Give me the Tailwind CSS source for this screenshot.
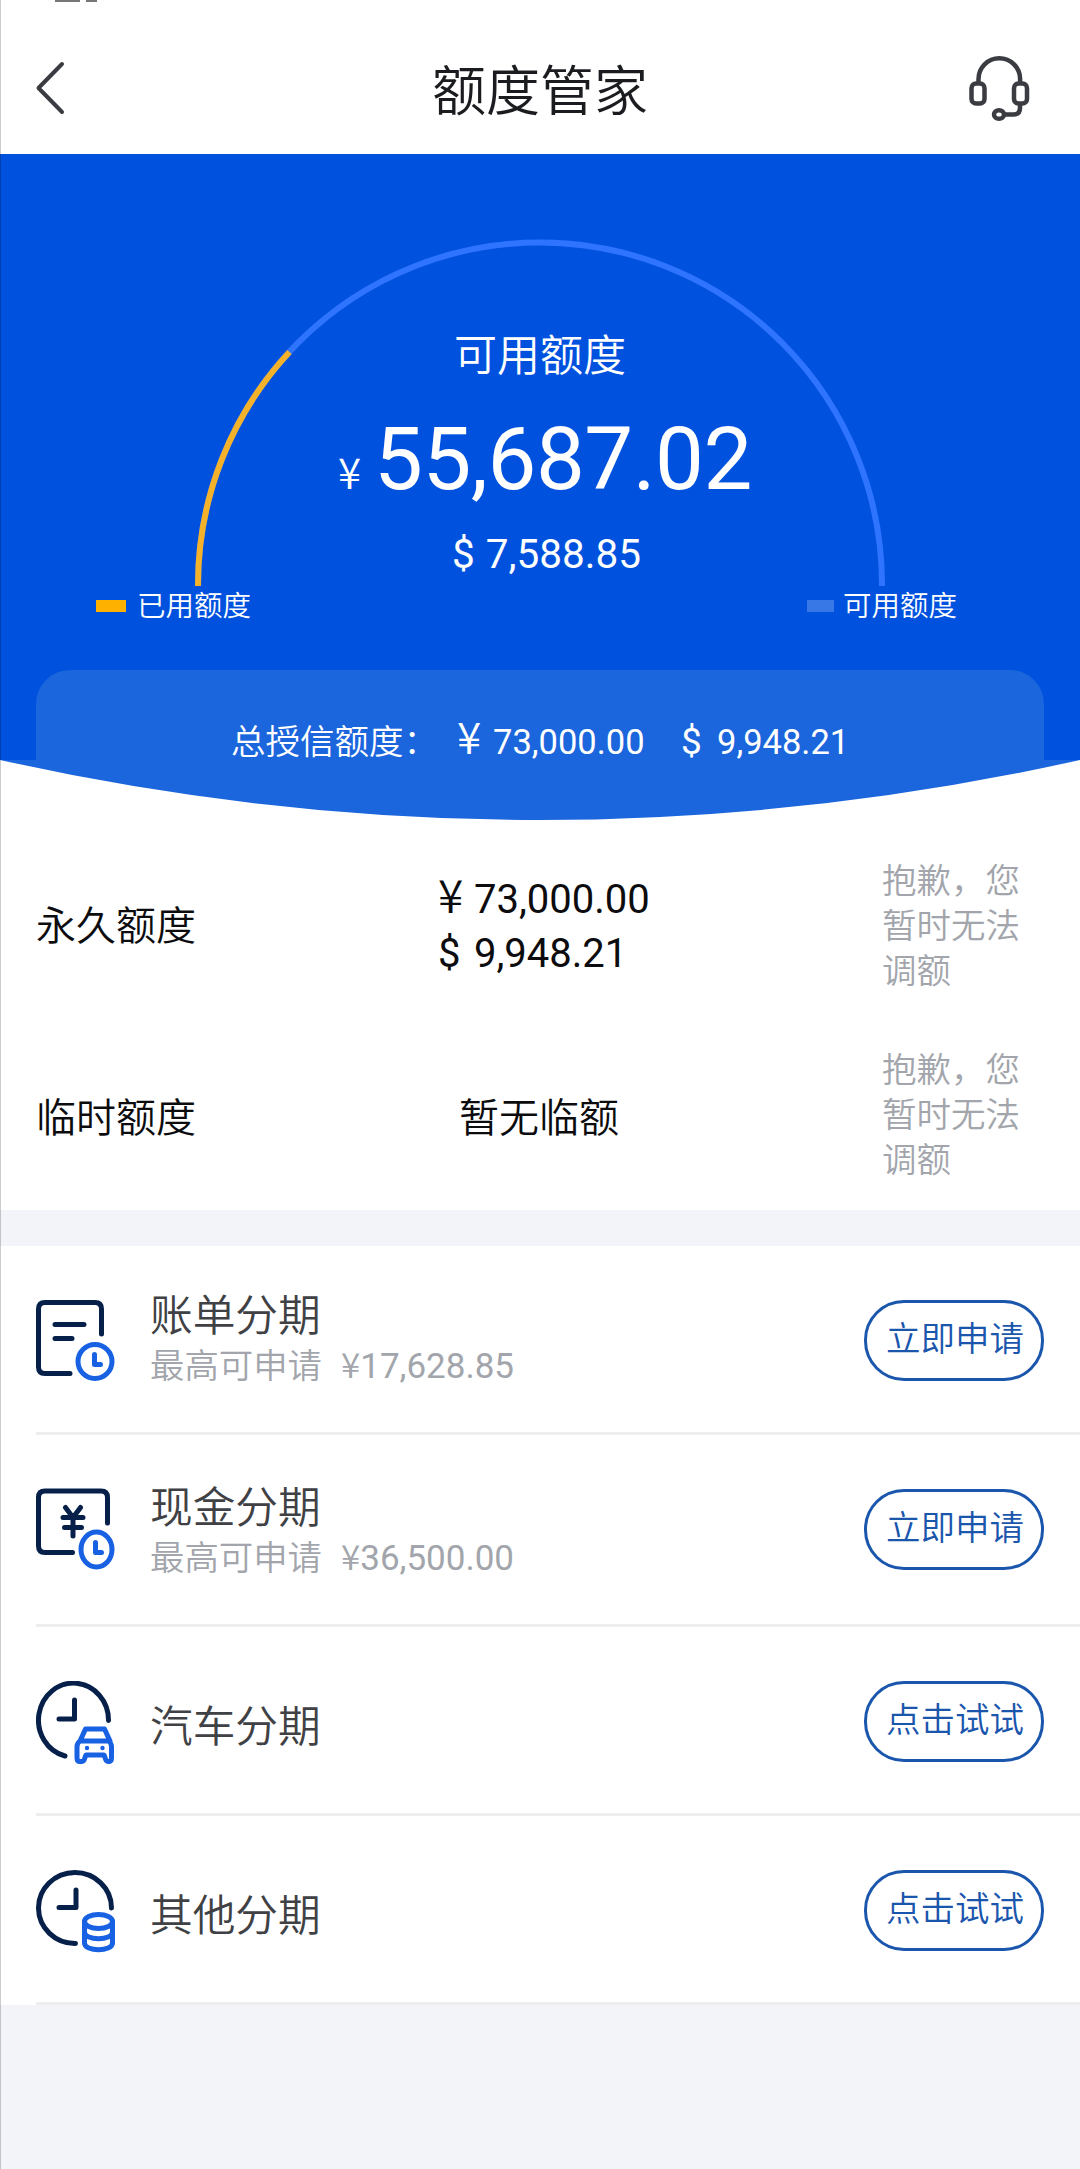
<!DOCTYPE html>
<html lang="zh-CN">
<head>
<meta charset="utf-8">
<title>额度管家</title>
<script src="https://cdn.jsdelivr.net/npm/@tailwindcss/browser@4"></script>
</head>
<body class="bg-[#f3f4f9] font-['Roboto','Noto_Sans_CJK_SC_DemiLight','Noto_Sans_CJK_SC',sans-serif]">
<div class="relative flex h-[2169px] w-[1080px] flex-col overflow-hidden">
  <div class="absolute inset-y-0 left-0 z-10 w-px bg-black/20"></div>

  <!-- Title bar -->
  <header class="relative flex h-[154px] items-start justify-between bg-white">
    <div class="absolute top-0 left-[55px] flex gap-[6px]"><i class="h-[2px] w-[25px] bg-[#777]"></i><i class="h-[2px] w-[11px] bg-[#777]"></i></div>
    <svg class="mt-[60px] ml-[34px] h-[56px] w-[32px]" viewBox="0 0 32 56" fill="none" stroke="#3a3c41" stroke-width="4" stroke-linecap="round" stroke-linejoin="round"><path d="M28 4 4.500 28 28 52"/></svg>
    <h1 class="mt-[53px] ml-[48px] text-[54px] leading-[80px] text-[#1b1c1f]">额度管家</h1>
    <svg class="mt-[54px] mr-[47px] h-[68px] w-[67px]" viewBox="0 0 67 68" fill="none" stroke="#3a3c41" stroke-width="4.500" stroke-linecap="round">
      <path d="M12.500 28v-3a20.800 20.800 0 0 1 41.600 0v3"/>
      <rect x="5.500" y="29.500" width="13" height="20" rx="4.500"/><rect x="48" y="29.500" width="13" height="20" rx="4.500"/>
      <path d="M54 51v3q0 6.500-6.500 6.500H39"/><ellipse cx="33" cy="60.500" rx="5" ry="4.300"/>
    </svg>
  </header>

  <!-- Credit gauge -->
  <section class="relative flex h-[606px] flex-col items-center bg-[#0052de] text-white">
    <svg class="absolute top-0 left-0 h-[440px] w-[1080px]" viewBox="0 0 1080 440" fill="none" stroke-width="6">
      <path d="M198 432V430.500A342 342 0 0 1 882 430.500V432" stroke="#2f74ff"/>
      <path d="M198 432V430.500A342 342 0 0 1 289.500 198" stroke="#f3b229"/>
    </svg>
    <p class="relative mt-[172px] text-[43px] leading-[60px]">可用额度</p>
    <p class="relative mt-[33px] ml-[6px] flex h-[80px] items-baseline gap-[9px] text-[87px] leading-[80px]"><span class="w-[31px] text-center font-['Noto_Sans_CJK_SC_DemiLight'] text-[42px]">¥</span><span class="tracking-[-0.5px]">55,687.02</span></p>
    <p class="relative mt-[30px] ml-[13px] h-[50px] text-[40.5px] leading-[50px]"><span class="mr-[1px]">$</span> 7,588.85</p>
    <div class="relative mt-[12px] flex h-[32px] w-full items-center justify-between pr-[123px] pl-[96px] text-[28.5px] leading-[32px]">
      <div class="flex items-center"><i class="mr-[11px] mb-[2px] h-[12px] w-[30px] bg-[#ffb100]"></i><span>已用额度</span></div>
      <div class="flex items-center"><i class="mr-[9px] mb-[2px] h-[12px] w-[27px] bg-[#3777e6]"></i><span>可用额度</span></div>
    </div>
    <div class="mt-[47px] flex h-[90px] w-[1008px] items-baseline rounded-t-[34px] bg-[#1b65dd] pt-[45px] pl-[195px] text-[34.5px] leading-[40px] whitespace-nowrap">
      <span class="w-[226px]">总授信额度：</span>
      <span class="w-[36px] font-['Noto_Sans_CJK_SC_DemiLight'] text-[44px]">¥</span><span class="w-[188px]">73,000.00</span>
      <span class="w-[36px] text-[37px]">$</span><span>9,948.21</span>
    </div>
  </section>

  <!-- Limits -->
  <section class="h-[450px] bg-white">
    <svg class="block h-[61px] w-[1080px]" viewBox="0 0 1080 61"><path fill="#1b65dd" d="M0 0Q540 120 1080 0Z"/></svg>
    <div class="flex h-[183px] items-center pt-[28px] pl-[36px] text-[40px] leading-[54px] text-[#0c0c0e]">
      <p class="w-[402px] leading-[60px]">永久额度</p>
      <div class="w-[444px]">
        <p class="-mt-[7px] mb-[7px] flex h-[54px] items-baseline"><span class="w-[36px] font-['Noto_Sans_CJK_SC_DemiLight'] text-[46px] leading-[54px]">¥</span>73,000.00</p>
        <p class="flex h-[54px] items-baseline"><span class="w-[36px]">$</span>9,948.21</p>
      </div>
      <p class="w-[145px] text-[34.5px] leading-[45px] text-[#a2a5ab]">抱歉，您暂时无法调额</p>
    </div>
    <div class="flex h-[206px] items-center pt-[16px] pl-[36px] text-[40px] leading-[54px] text-[#0c0c0e]">
      <p class="mt-[8px] w-[423px]">临时额度</p>
      <p class="mt-[8px] w-[423px]">暂无临额</p>
      <p class="w-[145px] text-[34.5px] leading-[45px] text-[#a2a5ab]">抱歉，您暂时无法调额</p>
    </div>
  </section>

  <!-- Instalment products -->
  <ul class="mt-[36px] bg-white text-[#404144]">
    <li class="ml-[36px] flex h-[189px] items-start border-b-[3px] border-[#eee] pr-[36px]">
      <svg class="mt-[54px] h-[82px] w-[80px]" viewBox="0 0 80 82" fill="none" stroke-width="5" stroke-linecap="round" stroke-linejoin="round">
        <path stroke="#06204a" d="M65.500 34V9q0-6.500-6.500-6.500H9Q2.500 2.500 2.500 9v58q0 6.500 6.500 6.500h25M19 24.500h29M19 38.500h17"/>
        <g stroke="#1761e2"><circle cx="59" cy="61.500" r="17"/><path d="M58.500 54.500v10h6"/></g>
      </svg>
      <div class="mt-[44px] ml-[34px] flex-1"><p class="text-[42.700px] leading-[52px]">账单分期</p><p class="flex text-[34.400px] leading-[48px] text-[#a2a5ab]"><span class="w-[191px]">最高可申请</span><span class="-mt-[3px] text-[35px]"><span class="font-['Noto_Sans_CJK_SC_DemiLight']">¥</span>17,628.85</span></p></div>
      <button class="mt-[54px] h-[81px] w-[180px] rounded-[40px] border-[3px] border-[#1b56ad] pb-[3px] pl-[2px] text-[34.5px] leading-[50px] text-[#1b56ad]">立即申请</button>
    </li>
    <li class="ml-[36px] flex h-[192px] items-start border-b-[3px] border-[#eee] pr-[36px]">
      <svg class="mt-[53px] h-[82px] w-[80px]" viewBox="0 0 80 82" fill="none" stroke-width="5" stroke-linecap="round" stroke-linejoin="round">
        <path stroke="#06204a" d="M71.500 35V9.500Q71.500 3 65 3H9Q2.500 3 2.500 9.500V58q0 6.500 6.500 6.500h27.500M29.500 19.500l7.500 10 7.500-10M27 29.500h20M28.500 39.500h17M37 29.500V48"/>
        <g stroke="#1761e2"><ellipse cx="60.500" cy="61.500" rx="15.500" ry="17.500"/><path d="M59.500 54.500v10h6"/></g>
      </svg>
      <div class="mt-[47px] ml-[34px] flex-1"><p class="text-[42.700px] leading-[52px]">现金分期</p><p class="flex text-[34.400px] leading-[48px] text-[#a2a5ab]"><span class="w-[191px]">最高可申请</span><span class="-mt-[3px] text-[35px]"><span class="font-['Noto_Sans_CJK_SC_DemiLight']">¥</span>36,500.00</span></p></div>
      <button class="mt-[54px] h-[81px] w-[180px] rounded-[40px] border-[3px] border-[#1b56ad] pb-[3px] pl-[2px] text-[34.5px] leading-[50px] text-[#1b56ad]">立即申请</button>
    </li>
    <li class="ml-[36px] flex h-[189px] items-start border-b-[3px] border-[#eee] pr-[36px]">
      <svg class="mt-[54px] h-[83px] w-[80px]" viewBox="0 0 80 83" fill="none" stroke-width="5" stroke-linecap="round" stroke-linejoin="round">
        <path stroke="#06204a" d="M72.500 39.500A35 37 0 1 0 29 75M38.500 19v19H23"/>
        <g stroke="#1761e2"><path d="M44 60l5.500-12h19l5.500 12zM44 60q-3 2-3 6v11q0 3.500 3 3.500h2q2 0 3-4l1-2.500h18l1 2.500q1 4 3 4h.500q3 0 3-3.500V66q0-4-3-6"/></g>
        <circle cx="51" cy="67" r="2.200" fill="#1761e2"/><circle cx="66.500" cy="67" r="2.200" fill="#1761e2"/>
      </svg>
      <p class="mt-[73px] ml-[34px] flex-1 text-[42.700px] leading-[54px]">汽车分期</p>
      <button class="mt-[54px] h-[81px] w-[180px] rounded-[40px] border-[3px] border-[#1b56ad] pb-[3px] pl-[2px] text-[34.5px] leading-[50px] text-[#1b56ad]">点击试试</button>
    </li>
    <li class="ml-[36px] flex h-[189px] items-start border-b-[3px] border-[#eee] pr-[36px]">
      <svg class="mt-[54px] h-[83px] w-[80px]" viewBox="0 0 80 83" fill="none" stroke-width="5" stroke-linecap="round" stroke-linejoin="round">
        <path stroke="#06204a" d="M75.500 38A36.500 35.500 0 1 0 39.500 73.500M40 20v17.500H23"/>
        <g stroke="#1761e2"><ellipse cx="62.500" cy="51.500" rx="14" ry="7"/><path d="M48.500 51.500V73c0 9 28 9 28 0V51.500M48.500 62c0 9 28 9 28 0"/></g>
      </svg>
      <p class="mt-[73px] ml-[34px] flex-1 text-[42.700px] leading-[54px]">其他分期</p>
      <button class="mt-[54px] h-[81px] w-[180px] rounded-[40px] border-[3px] border-[#1b56ad] pb-[3px] pl-[2px] text-[34.5px] leading-[50px] text-[#1b56ad]">点击试试</button>
    </li>
  </ul>
</div>
</body>
</html>
